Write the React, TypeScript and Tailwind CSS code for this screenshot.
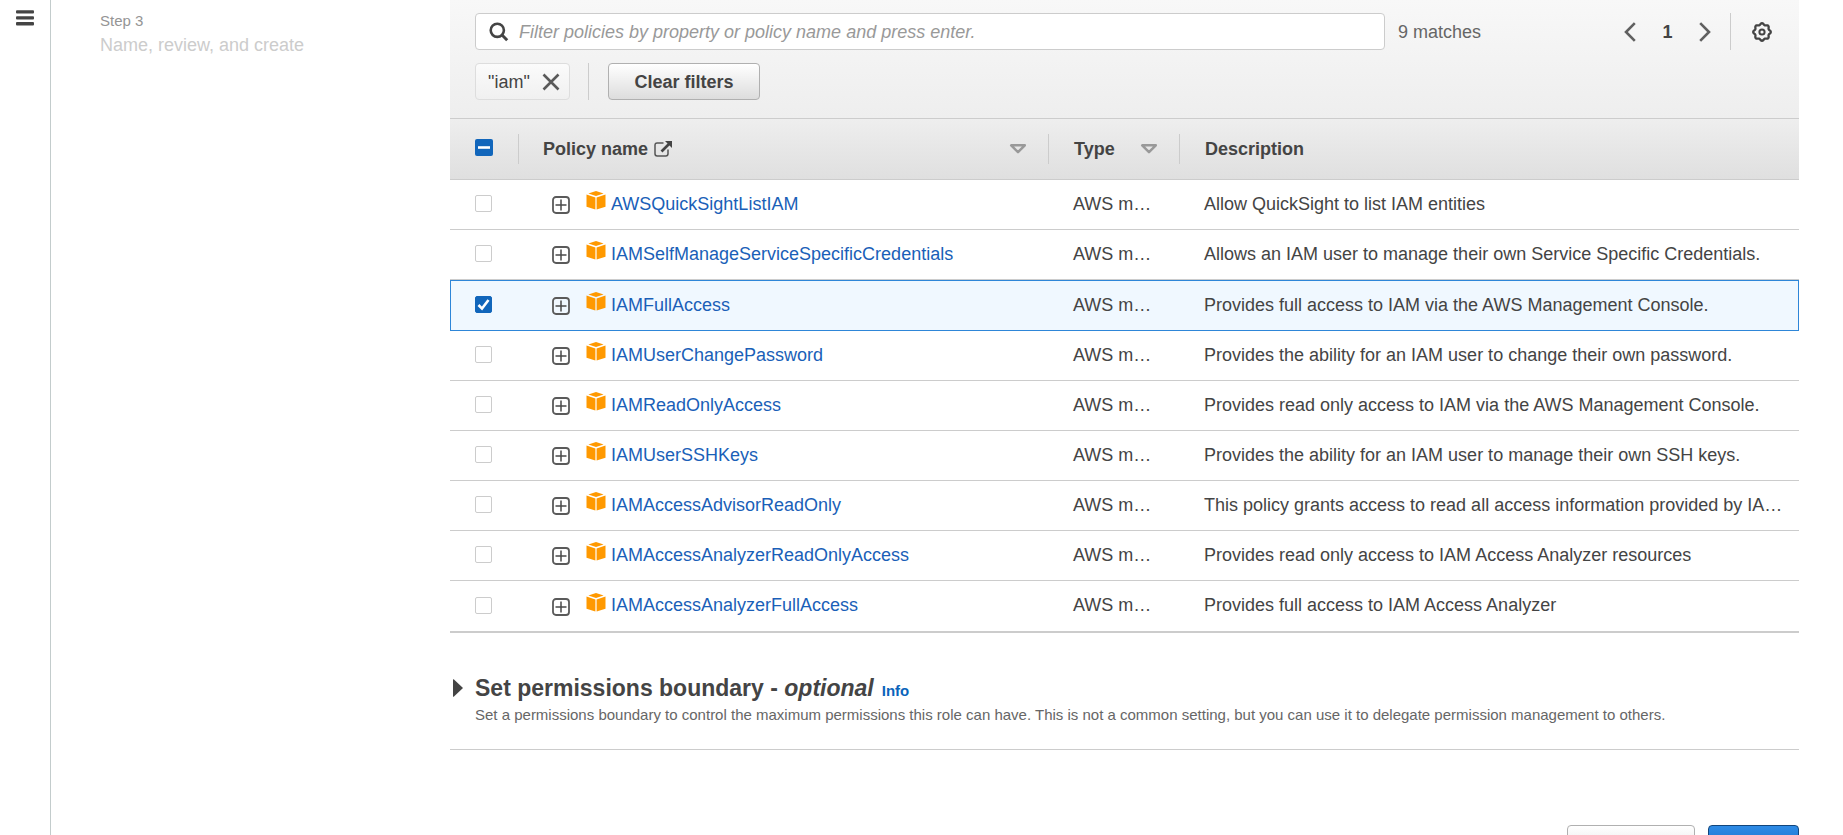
import React from "react";

type Policy = { name: string; description: string; selected?: boolean };

const policies: Policy[] = [
  { name: "AWSQuickSightListIAM", description: "Allow QuickSight to list IAM entities" },
  {
    name: "IAMSelfManageServiceSpecificCredentials",
    description: "Allows an IAM user to manage their own Service Specific Credentials.",
  },
  {
    name: "IAMFullAccess",
    description: "Provides full access to IAM via the AWS Management Console.",
    selected: true,
  },
  {
    name: "IAMUserChangePassword",
    description: "Provides the ability for an IAM user to change their own password.",
  },
  {
    name: "IAMReadOnlyAccess",
    description: "Provides read only access to IAM via the AWS Management Console.",
  },
  {
    name: "IAMUserSSHKeys",
    description: "Provides the ability for an IAM user to manage their own SSH keys.",
  },
  {
    name: "IAMAccessAdvisorReadOnly",
    description:
      "This policy grants access to read all access information provided by IAM access advisor.",
  },
  {
    name: "IAMAccessAnalyzerReadOnlyAccess",
    description: "Provides read only access to IAM Access Analyzer resources",
  },
  {
    name: "IAMAccessAnalyzerFullAccess",
    description: "Provides full access to IAM Access Analyzer",
  },
];

// Closed outline of a cog with eight rounded lobes, centred on (10, 10).
const gearOutline =
  Array.from({ length: 96 }, (_, i) => {
    const angle = (i / 96) * Math.PI * 2;
    const radius = 8 + 0.8 * Math.cos(angle * 8);
    const x = 10 + radius * Math.sin(angle);
    const y = 10 - radius * Math.cos(angle);
    return `${i === 0 ? "M" : "L"}${x.toFixed(2)} ${y.toFixed(2)}`;
  }).join("") + "Z";

function MenuIcon() {
  return (
    <svg width="18" height="16" viewBox="0 0 18 16" className="block" aria-hidden="true">
      <g fill="#444">
        <rect x="0" y="0.3" width="18" height="3.3" rx="1" />
        <rect x="0" y="6.2" width="18" height="3.3" rx="1" />
        <rect x="0" y="12.1" width="18" height="3.3" rx="1" />
      </g>
    </svg>
  );
}

function SearchIcon() {
  return (
    <svg width="20" height="20" viewBox="0 0 20 20" className="block shrink-0" aria-hidden="true">
      <circle cx="8.3" cy="8.3" r="6.6" fill="none" stroke="#444" strokeWidth="2.6" />
      <path d="M12.8 12.8L18.2 18.2" stroke="#444" strokeWidth="3" />
    </svg>
  );
}

function CloseIcon() {
  return (
    <svg width="18" height="18" viewBox="0 0 18 18" className="block" aria-hidden="true">
      <path d="M1.5 1.5L16.5 16.5M16.5 1.5L1.5 16.5" stroke="#5a5a5a" strokeWidth="2.6" />
    </svg>
  );
}

function Chevron({ flip }: { flip?: boolean }) {
  return (
    <svg width="12" height="20" viewBox="0 0 12 20" className="block" aria-hidden="true">
      <path
        d={flip ? "M1.2 1.2L10 10L1.2 18.8" : "M10.8 1.2L2 10L10.8 18.8"}
        fill="none"
        stroke="#606060"
        strokeWidth="2.6"
      />
    </svg>
  );
}

function GearIcon() {
  return (
    <svg width="20" height="20" viewBox="0 0 20 20" className="block" aria-hidden="true">
      <path d={gearOutline} fill="none" stroke="#444" strokeWidth="2.3" strokeLinejoin="round" />
      <circle cx="10" cy="10" r="2.6" fill="none" stroke="#444" strokeWidth="2" />
    </svg>
  );
}

function ExternalIcon() {
  return (
    <svg width="18" height="16" viewBox="0 0 18 16" className="block" aria-hidden="true">
      <path
        d="M9.5 2H3.200Q1 2 1 4.200V12.800Q1 15 3.200 15H11.800Q14 15 14 12.800V8.500"
        fill="none"
        stroke="#555"
        strokeWidth="1.500"
      />
      <path d="M7.500 10.500L15 3" stroke="#444" strokeWidth="2.600" />
      <path d="M11 0H18V7Z" fill="#444" />
    </svg>
  );
}

function SortIcon() {
  return (
    <svg width="18" height="10" viewBox="0 0 18 10" className="block" aria-hidden="true">
      <path d="M2.200 1.300H15.800L9 8.200Z" fill="none" stroke="#999" strokeWidth="2.500" strokeLinejoin="round" />
    </svg>
  );
}

function ExpandIcon() {
  return (
    <svg width="18" height="18" viewBox="0 0 18 18" className="block" aria-hidden="true">
      <rect x="1" y="1" width="16" height="16" rx="3" fill="none" stroke="#5a5a5a" strokeWidth="1.800" />
      <path d="M9 3.500V14.500M3.500 9H14.500" stroke="#4a4a4a" strokeWidth="1.500" />
    </svg>
  );
}

function CubeIcon() {
  return (
    <svg width="20" height="19" viewBox="0 0 20 19" className="block" aria-hidden="true">
      <g fill="#ff9900">
        <path d="M10 0L17.600 2.500L10 5L2.400 2.500Z" />
        <path d="M0.500 3.600L9.400 6.600V18.600L0.500 15.800Z" />
        <path d="M19.500 3.600L10.600 6.600V18.600L19.500 15.800Z" />
      </g>
    </svg>
  );
}

function CheckMark() {
  return (
    <svg width="17" height="17" viewBox="0 0 17 17" className="pointer-events-none col-start-1 row-start-1" aria-hidden="true">
      <path d="M3.500 9L7 12.600L13.500 4" fill="none" stroke="#fff" strokeWidth="2.600" />
    </svg>
  );
}

function DashMark() {
  return (
    <svg width="18" height="17" viewBox="0 0 18 17" className="pointer-events-none col-start-1 row-start-1" aria-hidden="true">
      <path d="M3 8.500H15" stroke="#fff" strokeWidth="2.600" />
    </svg>
  );
}

function PolicyRow({ policy, last }: { policy: Policy; last: boolean }) {
  const [checked, setChecked] = React.useState(!!policy.selected);
  const edge = checked
    ? "h-[51px] border-y border-[#2e86d8] bg-[#f0f8ff] pb-0.5"
    : last
      ? "h-[52px] border-b-2 border-[#ccc] pb-0.5"
      : "h-[50px] border-b border-[#ccc] pb-0.5";
  return (
    <tr>
      <td className={`${edge} ${checked ? "border-l pl-6" : "pl-[25px]"}`}>
        <span className="grid w-[17px]">
          <input
            type="checkbox"
            checked={checked}
            onChange={() => setChecked(!checked)}
            aria-label={`Select ${policy.name}`}
            className="col-start-1 row-start-1 size-[17px] appearance-none rounded-xs border border-[#ccc] bg-white checked:border-[#1166bb] checked:bg-[#1166bb]"
          />
          {checked && <CheckMark />}
        </span>
      </td>
      <td className={`${edge} pl-[33px]`}>
        <div className="flex items-center">
          <button type="button" aria-label={`Expand ${policy.name}`} className="mt-[3px]">
            <ExpandIcon />
          </button>
          <span className="mr-[5px] mb-1.5 ml-4">
            <CubeIcon />
          </span>
          <a href="#" className="text-[#1a5fb8]">
            {policy.name}
          </a>
        </div>
      </td>
      <td className={`${edge} truncate pr-6 pl-6`}>AWS managed</td>
      <td className={`${edge} truncate pr-4 pl-6 ${checked ? "border-r" : ""}`}>{policy.description}</td>
    </tr>
  );
}

export default function App() {
  return (
    <div className="flex h-screen overflow-hidden bg-white font-['Liberation_Sans',Arial,sans-serif] text-[18px] leading-6 text-[#444]">
      <nav className="w-[51px] shrink-0 border-r border-[#c3cccc] pt-[10px] pl-4">
        <button type="button" aria-label="Open navigation" className="block">
          <MenuIcon />
        </button>
      </nav>

      <aside className="w-[399px] shrink-0 pt-[9px] pl-[49px]">
        <p className="text-[15px] text-[#959595]">Step 3</p>
        <p className="text-[#ccc]">Name, review, and create</p>
      </aside>

      <main className="mr-11 min-w-0 flex-1">
        <section className="flex h-[119px] flex-col gap-[13px] border-b border-[#ccc] bg-linear-to-b from-[#f8f8f8] to-[#eee] pt-[13px] pr-[27px] pl-[25px]">
          <div className="flex items-center">
            <label className="flex h-[37px] max-w-[910px] flex-1 items-center gap-2.5 rounded-sm border border-[#ccc] bg-white pr-3 pl-[13px]">
              <SearchIcon />
              <input
                type="text"
                aria-label="Filter policies"
                placeholder="Filter policies by property or policy name and press enter."
                className="min-w-0 flex-1 bg-transparent outline-none placeholder:text-[#999] placeholder:italic"
              />
            </label>
            <span className="ml-[13px] text-[#666]">9 matches</span>
            <div className="ml-auto flex items-center">
              <button type="button" aria-label="Previous page">
                <Chevron />
              </button>
              <span className="w-[63px] text-center font-bold">1</span>
              <button type="button" aria-label="Next page">
                <Chevron flip />
              </button>
              <span className="mr-[21px] ml-[19px] h-[37px] w-px bg-[#ccc]" />
              <button type="button" aria-label="Preferences">
                <GearIcon />
              </button>
            </div>
          </div>
          <div className="flex items-center">
            <span className="flex h-[37px] w-[95px] items-center justify-between rounded-sm border border-[#ddd] bg-linear-to-b from-[#fbfbfb] to-[#f0f0f0] pr-[9px] pl-3">
              "iam"
              <button type="button" aria-label="Remove filter">
                <CloseIcon />
              </button>
            </span>
            <span className="mr-[19px] ml-[18px] h-[37px] w-px bg-[#ccc]" />
            <button
              type="button"
              className="h-[37px] w-[152px] rounded-sm border border-[#b0b0b0] bg-linear-to-b from-white to-[#ddd] font-bold"
            >
              Clear filters
            </button>
          </div>
        </section>

        <table className="w-full table-fixed border-separate border-spacing-0">
          <colgroup>
            <col className="w-[69px]" />
            <col className="w-[530px]" />
            <col className="w-[131px]" />
            <col />
          </colgroup>
          <thead>
            <tr className="bg-linear-to-b from-[#eee] to-[#dfdfdf] text-left">
              <th className="h-[61px] border-b border-[#ccc] p-0 pl-[25px]">
                <div className="flex h-[30px] items-center border-r border-[#ccc] pb-[3px]">
                  <span className="grid w-[18px]">
                    <input
                      type="checkbox"
                      defaultChecked
                      aria-label="Select all policies"
                      className="col-start-1 row-start-1 h-[17px] w-[18px] appearance-none rounded-xs bg-[#1166bb]"
                    />
                    <DashMark />
                  </span>
                </div>
              </th>
              <th className="border-b border-[#ccc] p-0 pl-6">
                <div className="flex h-[30px] items-center border-r border-[#ccc] pr-[21px]">
                  Policy name
                  <a href="#" aria-label="Open policies" className="ml-1.5">
                    <ExternalIcon />
                  </a>
                  <button type="button" aria-label="Sort by policy name" className="ml-auto">
                    <SortIcon />
                  </button>
                </div>
              </th>
              <th className="border-b border-[#ccc] p-0 pl-[25px]">
                <div className="flex h-[30px] items-center border-r border-[#ccc] pr-[21px]">
                  Type
                  <button type="button" aria-label="Sort by type" className="ml-auto">
                    <SortIcon />
                  </button>
                </div>
              </th>
              <th className="border-b border-[#ccc] p-0 pl-[25px]">Description</th>
            </tr>
          </thead>
          <tbody>
            {policies.map((policy, i) => (
              <PolicyRow key={policy.name} policy={policy} last={i === policies.length - 1} />
            ))}
          </tbody>
        </table>

        <section className="border-b border-[#ccc] pt-10 pb-[22px] pl-[25px]">
          <h2 className="-ml-[22px] flex items-center text-[23px] leading-[30px] font-bold">
            <button type="button" aria-label="Expand permissions boundary" className="mr-3">
              <svg width="10" height="18" viewBox="0 0 10 18" className="block" aria-hidden="true">
                <path d="M0 0.500Q0 0 1 0.500L10 9L1 17.500Q0 18 0 17.500Z" fill="#444" />
              </svg>
            </button>
            <span>
              Set permissions boundary - <em>optional</em>
              <a href="#" className="ml-2 text-[15px] leading-none text-[#0a64bb]">
                Info
              </a>
            </span>
          </h2>
          <p className="text-[15px]/6 text-[#666]">
            Set a permissions boundary to control the maximum permissions this role can have. This is not a common
            setting, but you can use it to delegate permission management to others.
          </p>
        </section>

        <div className="flex justify-end gap-[13px] pt-[75px]">
          <button
            type="button"
            className="h-[37px] w-32 rounded-sm border border-[#b0b0b0] bg-linear-to-b from-white to-[#ddd] font-bold"
          >
            Previous
          </button>
          <button
            type="button"
            className="h-[37px] w-[91px] rounded-sm border border-[#12467c] bg-linear-to-b from-[#2e8be6] to-[#1166bb] font-bold text-white"
          >
            Next
          </button>
        </div>
      </main>
    </div>
  );
}
